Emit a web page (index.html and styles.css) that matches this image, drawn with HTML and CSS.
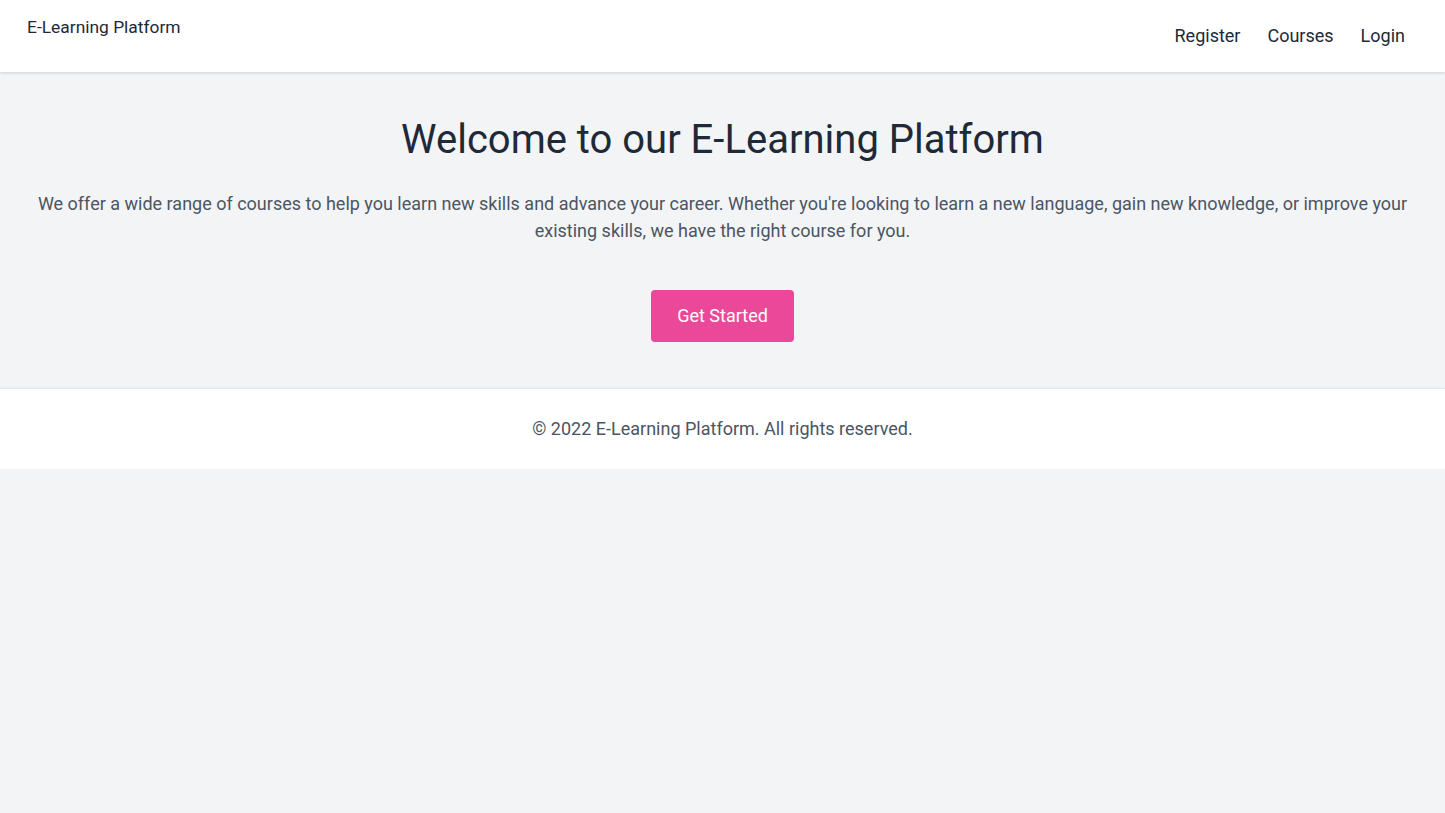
FILE: index.html
```html
<!DOCTYPE html>
<html lang="en">
<head>
    <meta charset="UTF-8">
    <meta name="viewport" content="width=device-width, initial-scale=1.0">
    <title>E-Learning Platform</title>
    <link rel="stylesheet" href="styles.css">
</head>
<body>

    <!-- Header -->
    <header class="header">
        <div class="logo">E-Learning Platform</div>
        <nav class="nav">
            <a href="#">Register</a>
            <a href="#">Courses</a>
            <a href="#">Login</a>
        </nav>
    </header>

    <!-- Hero -->
    <main class="hero">
        <h1>Welcome to our E-Learning Platform</h1>
        <p>We offer a wide range of courses to help you learn new skills and advance your career. Whether you're looking to learn a new language, gain new knowledge, or improve your existing skills, we have the right course for you.</p>
        <a href="#" class="btn">Get Started</a>
    </main>

    <!-- Footer -->
    <footer class="footer">
        <p>&copy; 2022 E-Learning Platform. All rights reserved.</p>
    </footer>

</body>
</html>
```

FILE: styles.css
```css
body {
    font-family: 'Roboto', sans-serif;
    margin: 0;
    padding: 0;
    background-color: #f3f4f6;
    color: #1f2937;
}

.header {
    display: flex;
    justify-content: space-between;
    align-items: flex-start;
    height: 72px;
    box-sizing: border-box;
    padding: 16px 40px 0 27px;
    background-color: #fff;
    box-shadow: 0 1px 3px rgba(0, 0, 0, 0.15);
}

.logo {
    font-size: 17.4px;
    line-height: 22px;
}

.nav {
    display: flex;
    gap: 27px;
    padding-top: 9px;
}

.nav a {
    color: #1f2937;
    text-decoration: none;
    font-size: 18px;
    line-height: 22px;
}

.hero {
    display: flex;
    flex-direction: column;
    align-items: center;
    text-align: center;
    padding: 44px 32px 46px;
}

.hero h1 {
    margin: 0;
    font-size: 40px;
    line-height: 48px;
    font-weight: 400;
    color: #1f2937;
}

.hero p {
    margin: 26px 0 0;
    font-size: 18px;
    line-height: 27px;
    color: #4b5563;
}

.btn {
    margin-top: 46px;
    display: inline-block;
    padding: 14px 26px;
    background-color: #ec4899;
    color: #fff;
    text-decoration: none;
    font-size: 18px;
    line-height: 24px;
    border-radius: 4px;
}

.footer {
    background-color: #fff;
    text-align: center;
    padding: 28px 0;
    box-shadow: 0 1px 3px rgba(0, 0, 0, 0.15);
    border-top: 1px solid #e5e7eb;
}

.footer p {
    margin: 0;
    font-size: 18px;
    line-height: 24px;
    color: #4b5563;
}
```
